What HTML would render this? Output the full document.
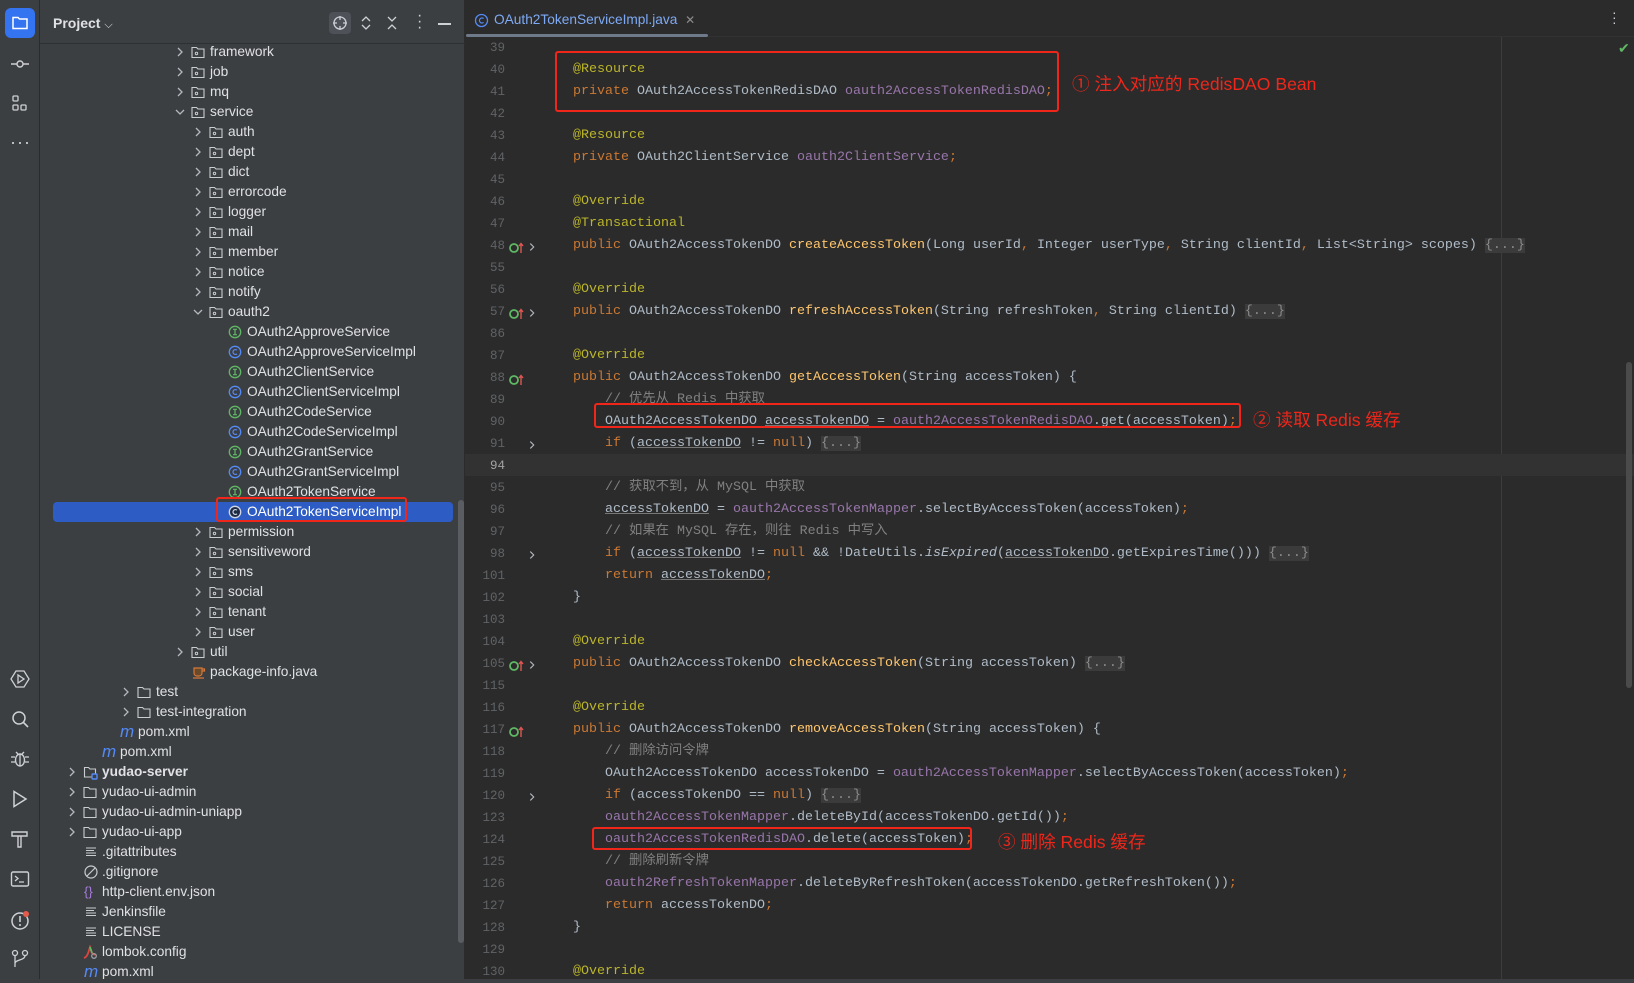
<!DOCTYPE html>
<html><head><meta charset="utf-8">
<style>
*{margin:0;padding:0;box-sizing:border-box}
body{width:1634px;height:983px;background:#2b2b2b;position:relative;overflow:hidden;font-family:"Liberation Sans","Noto Sans CJK SC",sans-serif}
.abs{position:absolute}
#side{left:0;top:0;width:40px;height:983px;background:#3c3f41;border-right:1px solid #2b2b2b}
#proj{left:40px;top:0;width:425px;height:983px;background:#3c3f41;border-right:1px solid #2b2b2b}
.r{position:absolute;height:20px;line-height:20px;font-size:13.7px;color:#dfe1e5;white-space:nowrap}
.r svg{position:absolute;top:3px}
.t{position:absolute}
.code{position:absolute;left:573px;height:22px;line-height:22px;font-family:"Liberation Mono","Noto Sans CJK SC",monospace;font-size:13.33px;color:#b0bcc8;white-space:pre}
.ln{position:absolute;left:466px;width:39px;text-align:right;height:22px;line-height:22px;font-family:"Liberation Mono",monospace;font-size:12.5px;color:#606366}
.k{color:#cc7832}.a{color:#bbb529}.f{color:#9876aa}.m{color:#ffc66d}.c{color:#808080}.u{text-decoration:underline;text-decoration-color:#777}
.fold{background:#3b3b3b;color:#8c8c8c}
.box{position:absolute;border:2px solid #f0261a;border-radius:3px}
.ann{position:absolute;color:#f0261a;font-size:17.6px;font-family:"Liberation Sans","Noto Sans CJK SC",sans-serif;white-space:nowrap}
</style></head><body>
<svg width="0" height="0" style="position:absolute">
<defs>
<symbol id="cr" viewBox="0 0 14 14"><path d="M5 3l4 4-4 4" fill="none" stroke="#b4b8bf" stroke-width="1.3"/></symbol>
<symbol id="cd" viewBox="0 0 14 14"><path d="M3 5l4 4 4-4" fill="none" stroke="#b4b8bf" stroke-width="1.3"/></symbol>
<symbol id="pk" viewBox="0 0 14 14"><path d="M1 2.5h4.5l1.5 1.5h6v8.5H1z" fill="none" stroke="#c9ccd1" stroke-width="1.1"/><circle cx="5.5" cy="8.5" r="1.2" fill="none" stroke="#c9ccd1"/></symbol>
<symbol id="fd" viewBox="0 0 14 14"><path d="M1 2.5h4.5l1.5 1.5h6v8.5H1z" fill="none" stroke="#c9ccd1" stroke-width="1.1"/></symbol>
<symbol id="ii" viewBox="0 0 14 14"><circle cx="7" cy="7" r="5.7" fill="none" stroke="#5fb865" stroke-width="1.3"/><path d="M5 4.3h4M5 9.7h4M7 4.3v5.4" stroke="#5fb865" stroke-width="1.2"/></symbol>
<symbol id="ci" viewBox="0 0 14 14"><circle cx="7" cy="7" r="5.7" fill="none" stroke="#548af7" stroke-width="1.3"/><path d="M9 5.2a2.4 2.4 0 1 0 0 3.6" fill="none" stroke="#548af7" stroke-width="1.2"/></symbol>
<symbol id="lf" viewBox="0 0 14 14"><path d="M2 3h10M2 5.5h8M2 8h10M2 10.5h10" stroke="#c9ccd1" stroke-width="1.1"/></symbol>
<symbol id="gi" viewBox="0 0 20 14"><circle cx="5" cy="7" r="4" fill="none" stroke="#5fb865" stroke-width="1.8"/><path d="M12 12V3M10 5l2-2.5 2 2.5" stroke="#e05555" stroke-width="1.4" fill="none"/></symbol>
</defs></svg>

<div class="abs" style="left:0;top:0;width:1634px;height:2px;background:#2b2b2b"></div>
<div id="side" class="abs">
 <div class="abs" style="left:5px;top:8px;width:30px;height:30px;background:#3574f0;border-radius:6px"></div>
 <svg class="abs" style="left:11px;top:14px" width="18" height="18" viewBox="0 0 18 18"><path d="M2 3.5h5l1.5 1.5h7.5v9.5H2z" fill="none" stroke="#fff" stroke-width="1.5"/></svg>
 <svg class="abs" style="left:10px;top:54px" width="20" height="20" viewBox="0 0 20 20"><circle cx="10" cy="10" r="3" fill="none" stroke="#ced0d6" stroke-width="1.4"/><path d="M1 10h6M13 10h6" stroke="#ced0d6" stroke-width="1.4"/></svg>
 <svg class="abs" style="left:10px;top:94px" width="20" height="20" viewBox="0 0 20 20"><rect x="3" y="2" width="5" height="5" rx="1" fill="none" stroke="#ced0d6" stroke-width="1.3"/><rect x="3" y="11" width="5" height="5" rx="1" fill="none" stroke="#ced0d6" stroke-width="1.3"/><rect x="11" y="11" width="5" height="5" rx="1" fill="none" stroke="#ced0d6" stroke-width="1.3"/></svg>
 <div class="abs" style="left:10px;top:132px;color:#ced0d6;font-size:18px;letter-spacing:1px">···</div>
 <svg class="abs" style="left:10px;top:669px" width="20" height="20" viewBox="0 0 20 20"><path d="M6 2h8l5 8-5 8H6l-5-8z" fill="none" stroke="#ced0d6" stroke-width="1.3"/><path d="M8 6v8l6-4z" fill="none" stroke="#ced0d6" stroke-width="1.3"/></svg>
 <svg class="abs" style="left:10px;top:709px" width="20" height="20" viewBox="0 0 20 20"><circle cx="9" cy="9" r="6" fill="none" stroke="#ced0d6" stroke-width="1.5"/><path d="M13.5 13.5l4.5 4.5" stroke="#ced0d6" stroke-width="1.6"/></svg>
 <svg class="abs" style="left:10px;top:749px" width="20" height="20" viewBox="0 0 20 20"><ellipse cx="10" cy="11" rx="4.5" ry="6" fill="none" stroke="#ced0d6" stroke-width="1.4"/><path d="M1 8h4M15 8h4M1 13h4M15 13h4M6 3l2 2M14 3l-2 2M10 5v12" stroke="#ced0d6" stroke-width="1.3"/></svg>
 <svg class="abs" style="left:10px;top:789px" width="20" height="20" viewBox="0 0 20 20"><path d="M4 2.5v15l12-7.5z" fill="none" stroke="#ced0d6" stroke-width="1.5"/></svg>
 <svg class="abs" style="left:10px;top:829px" width="20" height="20" viewBox="0 0 20 20"><path d="M2 3h15v4H2zM8 7v11h3V7" fill="none" stroke="#ced0d6" stroke-width="1.4"/></svg>
 <svg class="abs" style="left:10px;top:869px" width="20" height="20" viewBox="0 0 20 20"><rect x="1.5" y="3" width="17" height="14" rx="1.5" fill="none" stroke="#ced0d6" stroke-width="1.4"/><path d="M5 7l3 2.5-3 2.5M9 13h5" fill="none" stroke="#ced0d6" stroke-width="1.3"/></svg>
 <svg class="abs" style="left:10px;top:909px" width="22" height="22" viewBox="0 0 22 22"><circle cx="10" cy="12" r="8" fill="none" stroke="#ced0d6" stroke-width="1.5"/><path d="M10 7v6M10 15v2" stroke="#ced0d6" stroke-width="1.6"/><circle cx="16" cy="5" r="3" fill="#e55b4b"/></svg>
 <svg class="abs" style="left:10px;top:949px" width="20" height="20" viewBox="0 0 20 20"><circle cx="5" cy="4" r="2.5" fill="none" stroke="#ced0d6" stroke-width="1.3"/><circle cx="15" cy="4" r="2.5" fill="none" stroke="#ced0d6" stroke-width="1.3"/><path d="M5 6.5V18M15 6.5c0 5-10 4-10 8" fill="none" stroke="#ced0d6" stroke-width="1.3"/></svg>
</div>

<div id="proj" class="abs">
 <div class="abs" style="left:13px;top:15px;font-size:14px;font-weight:bold;color:#dfe1e5">Project <span style="font-weight:normal;font-size:11px">⌵</span></div>
 <div class="abs" style="left:289px;top:12px;width:22px;height:22px;background:#4e5157;border-radius:4px"></div>
 <svg class="abs" style="left:292px;top:15px" width="16" height="16" viewBox="0 0 16 16"><circle cx="8" cy="8" r="6" fill="none" stroke="#ced0d6" stroke-width="1.3"/><path d="M8 1v4M8 11v4M1 8h4M11 8h4" stroke="#ced0d6" stroke-width="1.3"/></svg>
 <svg class="abs" style="left:318px;top:15px" width="16" height="16" viewBox="0 0 16 16"><path d="M4 6l4-4 4 4M4 10l4 4 4-4" fill="none" stroke="#ced0d6" stroke-width="1.3"/></svg>
 <svg class="abs" style="left:344px;top:15px" width="16" height="16" viewBox="0 0 16 16"><path d="M4 2l4 4 4-4M4 14l4-4 4 4" fill="none" stroke="#ced0d6" stroke-width="1.3"/></svg>
 <div class="abs" style="left:377px;top:13px;width:3px;height:18px;color:#ced0d6;font-size:16px;line-height:6px;text-align:center">·<br>·<br>·</div>
 <div class="abs" style="left:398px;top:23px;width:13px;height:1.5px;background:#ced0d6"></div>
 <div class="abs" style="left:0;top:43px;width:425px;height:1px;background:#2e3033"></div>
 <div class="abs" style="left:13px;top:502px;width:400px;height:20px;background:#2e5cc5;border-radius:4px"></div>
 <div class="abs" style="left:418px;top:500px;width:6px;height:443px;background:#5a5d62;border-radius:3px"></div>
</div>

<div class="r" style="top:42px;left:0"><svg style="left:173px" width="14" height="14"><use href="#cr"/></svg><svg style="left:191px" width="14" height="14"><use href="#pk"/></svg><span class="t" style="left:210px">framework</span></div>
<div class="r" style="top:62px;left:0"><svg style="left:173px" width="14" height="14"><use href="#cr"/></svg><svg style="left:191px" width="14" height="14"><use href="#pk"/></svg><span class="t" style="left:210px">job</span></div>
<div class="r" style="top:82px;left:0"><svg style="left:173px" width="14" height="14"><use href="#cr"/></svg><svg style="left:191px" width="14" height="14"><use href="#pk"/></svg><span class="t" style="left:210px">mq</span></div>
<div class="r" style="top:102px;left:0"><svg style="left:173px" width="14" height="14"><use href="#cd"/></svg><svg style="left:191px" width="14" height="14"><use href="#pk"/></svg><span class="t" style="left:210px">service</span></div>
<div class="r" style="top:122px;left:0"><svg style="left:191px" width="14" height="14"><use href="#cr"/></svg><svg style="left:209px" width="14" height="14"><use href="#pk"/></svg><span class="t" style="left:228px">auth</span></div>
<div class="r" style="top:142px;left:0"><svg style="left:191px" width="14" height="14"><use href="#cr"/></svg><svg style="left:209px" width="14" height="14"><use href="#pk"/></svg><span class="t" style="left:228px">dept</span></div>
<div class="r" style="top:162px;left:0"><svg style="left:191px" width="14" height="14"><use href="#cr"/></svg><svg style="left:209px" width="14" height="14"><use href="#pk"/></svg><span class="t" style="left:228px">dict</span></div>
<div class="r" style="top:182px;left:0"><svg style="left:191px" width="14" height="14"><use href="#cr"/></svg><svg style="left:209px" width="14" height="14"><use href="#pk"/></svg><span class="t" style="left:228px">errorcode</span></div>
<div class="r" style="top:202px;left:0"><svg style="left:191px" width="14" height="14"><use href="#cr"/></svg><svg style="left:209px" width="14" height="14"><use href="#pk"/></svg><span class="t" style="left:228px">logger</span></div>
<div class="r" style="top:222px;left:0"><svg style="left:191px" width="14" height="14"><use href="#cr"/></svg><svg style="left:209px" width="14" height="14"><use href="#pk"/></svg><span class="t" style="left:228px">mail</span></div>
<div class="r" style="top:242px;left:0"><svg style="left:191px" width="14" height="14"><use href="#cr"/></svg><svg style="left:209px" width="14" height="14"><use href="#pk"/></svg><span class="t" style="left:228px">member</span></div>
<div class="r" style="top:262px;left:0"><svg style="left:191px" width="14" height="14"><use href="#cr"/></svg><svg style="left:209px" width="14" height="14"><use href="#pk"/></svg><span class="t" style="left:228px">notice</span></div>
<div class="r" style="top:282px;left:0"><svg style="left:191px" width="14" height="14"><use href="#cr"/></svg><svg style="left:209px" width="14" height="14"><use href="#pk"/></svg><span class="t" style="left:228px">notify</span></div>
<div class="r" style="top:302px;left:0"><svg style="left:191px" width="14" height="14"><use href="#cd"/></svg><svg style="left:209px" width="14" height="14"><use href="#pk"/></svg><span class="t" style="left:228px">oauth2</span></div>
<div class="r" style="top:322px;left:0"><svg style="left:228px" width="14" height="14"><use href="#ii"/></svg><span class="t" style="left:247px">OAuth2ApproveService</span></div>
<div class="r" style="top:342px;left:0"><svg style="left:228px" width="14" height="14"><use href="#ci"/></svg><span class="t" style="left:247px">OAuth2ApproveServiceImpl</span></div>
<div class="r" style="top:362px;left:0"><svg style="left:228px" width="14" height="14"><use href="#ii"/></svg><span class="t" style="left:247px">OAuth2ClientService</span></div>
<div class="r" style="top:382px;left:0"><svg style="left:228px" width="14" height="14"><use href="#ci"/></svg><span class="t" style="left:247px">OAuth2ClientServiceImpl</span></div>
<div class="r" style="top:402px;left:0"><svg style="left:228px" width="14" height="14"><use href="#ii"/></svg><span class="t" style="left:247px">OAuth2CodeService</span></div>
<div class="r" style="top:422px;left:0"><svg style="left:228px" width="14" height="14"><use href="#ci"/></svg><span class="t" style="left:247px">OAuth2CodeServiceImpl</span></div>
<div class="r" style="top:442px;left:0"><svg style="left:228px" width="14" height="14"><use href="#ii"/></svg><span class="t" style="left:247px">OAuth2GrantService</span></div>
<div class="r" style="top:462px;left:0"><svg style="left:228px" width="14" height="14"><use href="#ci"/></svg><span class="t" style="left:247px">OAuth2GrantServiceImpl</span></div>
<div class="r" style="top:482px;left:0"><svg style="left:228px" width="14" height="14"><use href="#ii"/></svg><span class="t" style="left:247px">OAuth2TokenService</span></div>
<div class="r" style="top:502px;left:0;color:#fff"><svg style="left:228px" width="14" height="14"><circle cx="7" cy="7" r="5.7" fill="#1f2a44" stroke="#cfd6e6" stroke-width="1.3"/><path d="M9 5.2a2.4 2.4 0 1 0 0 3.6" fill="none" stroke="#cfd6e6" stroke-width="1.2"/></svg><span class="t" style="left:247px">OAuth2TokenServiceImpl</span></div>
<div class="box" style="left:216px;top:497px;width:191px;height:25px"></div>
<div class="r" style="top:522px;left:0"><svg style="left:191px" width="14" height="14"><use href="#cr"/></svg><svg style="left:209px" width="14" height="14"><use href="#pk"/></svg><span class="t" style="left:228px">permission</span></div>
<div class="r" style="top:542px;left:0"><svg style="left:191px" width="14" height="14"><use href="#cr"/></svg><svg style="left:209px" width="14" height="14"><use href="#pk"/></svg><span class="t" style="left:228px">sensitiveword</span></div>
<div class="r" style="top:562px;left:0"><svg style="left:191px" width="14" height="14"><use href="#cr"/></svg><svg style="left:209px" width="14" height="14"><use href="#pk"/></svg><span class="t" style="left:228px">sms</span></div>
<div class="r" style="top:582px;left:0"><svg style="left:191px" width="14" height="14"><use href="#cr"/></svg><svg style="left:209px" width="14" height="14"><use href="#pk"/></svg><span class="t" style="left:228px">social</span></div>
<div class="r" style="top:602px;left:0"><svg style="left:191px" width="14" height="14"><use href="#cr"/></svg><svg style="left:209px" width="14" height="14"><use href="#pk"/></svg><span class="t" style="left:228px">tenant</span></div>
<div class="r" style="top:622px;left:0"><svg style="left:191px" width="14" height="14"><use href="#cr"/></svg><svg style="left:209px" width="14" height="14"><use href="#pk"/></svg><span class="t" style="left:228px">user</span></div>
<div class="r" style="top:642px;left:0"><svg style="left:173px" width="14" height="14"><use href="#cr"/></svg><svg style="left:191px" width="14" height="14"><use href="#pk"/></svg><span class="t" style="left:210px">util</span></div>
<div class="r" style="top:662px;left:0"><svg style="left:192px" width="14" height="14" viewBox="0 0 14 14"><path d="M2 3h8v5a3 3 0 0 1-3 3H5a3 3 0 0 1-3-3z" fill="#6b4a2a" stroke="#d4773a" stroke-width="1.2"/><path d="M10 4h2.5v2H10M1 13h11" stroke="#d4773a" stroke-width="1.2" fill="none"/></svg><span class="t" style="left:210px">package-info.java</span></div>
<div class="r" style="top:682px;left:0"><svg style="left:119px" width="14" height="14"><use href="#cr"/></svg><svg style="left:137px" width="14" height="14"><use href="#fd"/></svg><span class="t" style="left:156px">test</span></div>
<div class="r" style="top:702px;left:0"><svg style="left:119px" width="14" height="14"><use href="#cr"/></svg><svg style="left:137px" width="14" height="14"><use href="#fd"/></svg><span class="t" style="left:156px">test-integration</span></div>
<div class="r" style="top:722px;left:0"><span class="t" style="left:120px;color:#548af7;font-style:italic;font-size:17px">m</span><span class="t" style="left:138px">pom.xml</span></div>
<div class="r" style="top:742px;left:0"><span class="t" style="left:102px;color:#548af7;font-style:italic;font-size:17px">m</span><span class="t" style="left:120px">pom.xml</span></div>
<div class="r" style="top:762px;left:0"><svg style="left:65px" width="14" height="14"><use href="#cr"/></svg><svg style="left:83px" width="16" height="16" viewBox="0 0 16 16"><path d="M1.5 2.5h4l1.5 1.5h5.5v8h-11z" fill="none" stroke="#c9ccd1" stroke-width="1.1"/><rect x="9" y="9" width="5" height="5" rx="1" fill="#3c3f41" stroke="#548af7" stroke-width="1.4"/></svg><span class="t" style="left:102px;font-weight:bold">yudao-server</span></div>
<div class="r" style="top:782px;left:0"><svg style="left:65px" width="14" height="14"><use href="#cr"/></svg><svg style="left:83px" width="14" height="14"><use href="#fd"/></svg><span class="t" style="left:102px">yudao-ui-admin</span></div>
<div class="r" style="top:802px;left:0"><svg style="left:65px" width="14" height="14"><use href="#cr"/></svg><svg style="left:83px" width="14" height="14"><use href="#fd"/></svg><span class="t" style="left:102px">yudao-ui-admin-uniapp</span></div>
<div class="r" style="top:822px;left:0"><svg style="left:65px" width="14" height="14"><use href="#cr"/></svg><svg style="left:83px" width="14" height="14"><use href="#fd"/></svg><span class="t" style="left:102px">yudao-ui-app</span></div>
<div class="r" style="top:842px;left:0"><svg style="left:84px" width="14" height="14"><use href="#lf"/></svg><span class="t" style="left:102px">.gitattributes</span></div>
<div class="r" style="top:862px;left:0"><svg style="left:84px" width="14" height="14" viewBox="0 0 14 14"><circle cx="7" cy="7" r="6" fill="none" stroke="#c9ccd1" stroke-width="1.2"/><path d="M3 11l8-8" stroke="#c9ccd1" stroke-width="1.2"/></svg><span class="t" style="left:102px">.gitignore</span></div>
<div class="r" style="top:882px;left:0"><span class="t" style="left:84px;color:#a77be0;font-size:13px">{}</span><span class="t" style="left:102px">http-client.env.json</span></div>
<div class="r" style="top:902px;left:0"><svg style="left:84px" width="14" height="14"><use href="#lf"/></svg><span class="t" style="left:102px">Jenkinsfile</span></div>
<div class="r" style="top:922px;left:0"><svg style="left:84px" width="14" height="14"><use href="#lf"/></svg><span class="t" style="left:102px">LICENSE</span></div>
<div class="r" style="top:942px;left:0"><svg style="left:83px" width="15" height="15" viewBox="0 0 15 15"><path d="M1 13c3-1 4-4 6-11l2 6 3 2" fill="none" stroke="#e0443e" stroke-width="1.8"/><path d="M7 2l2 6" stroke="#5fb865" stroke-width="1.8"/><circle cx="11" cy="11" r="2.3" fill="none" stroke="#9aa0a8" stroke-width="1.3"/></svg><span class="t" style="left:102px">lombok.config</span></div>
<div class="r" style="top:962px;left:0"><span class="t" style="left:84px;color:#548af7;font-style:italic;font-size:17px">m</span><span class="t" style="left:102px">pom.xml</span></div>

<div class="abs" style="left:466px;top:0;width:1168px;height:37px;background:#2b2b2b;border-bottom:1px solid #323232"></div>
<svg class="abs" style="left:474px;top:13px" width="15" height="15"><circle cx="7.5" cy="7.5" r="6" fill="none" stroke="#548af7" stroke-width="1.3"/><path d="M9.6 5.6a2.5 2.5 0 1 0 0 3.8" fill="none" stroke="#548af7" stroke-width="1.2"/></svg>
<div class="abs" style="left:494px;top:12px;font-size:13.7px;color:#7eaaf5">OAuth2TokenServiceImpl.java <span style="color:#8c8c8c;font-size:12px;margin-left:4px">✕</span></div>
<div class="abs" style="left:466px;top:34px;width:242px;height:3px;background:#6e7a8a;border-radius:2px"></div>
<div class="abs" style="left:1612px;top:10px;width:3px;color:#ced0d6;font-size:14px;line-height:5px">·<br>·<br>·</div>

<div class="abs" style="left:1501px;top:37px;width:1px;height:942px;background:#3d3d3d"></div>
<div class="abs" style="left:465px;top:454px;width:1169px;height:22px;background:#323232"></div>
<div class="abs" style="left:1626px;top:362px;width:6px;height:326px;background:#4b4b4b;border-radius:3px"></div>
<div class="abs" style="left:1618px;top:40px;color:#5fb865;font-size:14px">✔</div>
<div class="abs" style="left:0;top:979px;width:1634px;height:4px;background:#3c3f41"></div>

<div class="ln" style="top:37px">39</div>
<div class="ln" style="top:59px">40</div><div class="code a" style="top:59px">@Resource</div>
<div class="ln" style="top:81px">41</div><div class="code" style="top:81px"><span class="k">private </span>OAuth2AccessTokenRedisDAO <span class="f">oauth2AccessTokenRedisDAO</span><span class="k">;</span></div>
<div class="ln" style="top:103px">42</div>
<div class="ln" style="top:125px">43</div><div class="code a" style="top:125px">@Resource</div>
<div class="ln" style="top:147px">44</div><div class="code" style="top:147px"><span class="k">private </span>OAuth2ClientService <span class="f">oauth2ClientService</span><span class="k">;</span></div>
<div class="ln" style="top:169px">45</div>
<div class="ln" style="top:191px">46</div><div class="code a" style="top:191px">@Override</div>
<div class="ln" style="top:213px">47</div><div class="code a" style="top:213px">@Transactional</div>
<div class="ln" style="top:235px">48</div><div class="code" style="top:235px"><span class="k">public </span>OAuth2AccessTokenDO <span class="m">createAccessToken</span>(Long userId<span class="k">, </span>Integer userType<span class="k">, </span>String clientId<span class="k">, </span>List&lt;String&gt; scopes) <span class="fold">{...}</span></div>
<div class="ln" style="top:257px">55</div>
<div class="ln" style="top:279px">56</div><div class="code a" style="top:279px">@Override</div>
<div class="ln" style="top:301px">57</div><div class="code" style="top:301px"><span class="k">public </span>OAuth2AccessTokenDO <span class="m">refreshAccessToken</span>(String refreshToken<span class="k">, </span>String clientId) <span class="fold">{...}</span></div>
<div class="ln" style="top:323px">86</div>
<div class="ln" style="top:345px">87</div><div class="code a" style="top:345px">@Override</div>
<div class="ln" style="top:367px">88</div><div class="code" style="top:367px"><span class="k">public </span>OAuth2AccessTokenDO <span class="m">getAccessToken</span>(String accessToken) {</div>
<div class="ln" style="top:389px">89</div><div class="code c" style="top:389px">    // 优先从 Redis 中获取</div>
<div class="ln" style="top:411px">90</div><div class="code" style="top:411px">    OAuth2AccessTokenDO <span class="u">accessTokenDO</span> = <span class="f">oauth2AccessTokenRedisDAO</span>.get(accessToken)<span class="k">;</span></div>
<div class="ln" style="top:433px">91</div><div class="code" style="top:433px">    <span class="k">if </span>(<span class="u">accessTokenDO</span> != <span class="k">null</span>) <span class="fold">{...}</span></div>
<div class="ln" style="top:455px;color:#a4a3a3">94</div>
<div class="ln" style="top:477px">95</div><div class="code c" style="top:477px">    // 获取不到，从 MySQL 中获取</div>
<div class="ln" style="top:499px">96</div><div class="code" style="top:499px">    <span class="u">accessTokenDO</span> = <span class="f">oauth2AccessTokenMapper</span>.selectByAccessToken(accessToken)<span class="k">;</span></div>
<div class="ln" style="top:521px">97</div><div class="code c" style="top:521px">    // 如果在 MySQL 存在，则往 Redis 中写入</div>
<div class="ln" style="top:543px">98</div><div class="code" style="top:543px">    <span class="k">if </span>(<span class="u">accessTokenDO</span> != <span class="k">null </span>&amp;&amp; !DateUtils.<i>isExpired</i>(<span class="u">accessTokenDO</span>.getExpiresTime())) <span class="fold">{...}</span></div>
<div class="ln" style="top:565px">101</div><div class="code" style="top:565px">    <span class="k">return </span><span class="u">accessTokenDO</span><span class="k">;</span></div>
<div class="ln" style="top:587px">102</div><div class="code" style="top:587px">}</div>
<div class="ln" style="top:609px">103</div>
<div class="ln" style="top:631px">104</div><div class="code a" style="top:631px">@Override</div>
<div class="ln" style="top:653px">105</div><div class="code" style="top:653px"><span class="k">public </span>OAuth2AccessTokenDO <span class="m">checkAccessToken</span>(String accessToken) <span class="fold">{...}</span></div>
<div class="ln" style="top:675px">115</div>
<div class="ln" style="top:697px">116</div><div class="code a" style="top:697px">@Override</div>
<div class="ln" style="top:719px">117</div><div class="code" style="top:719px"><span class="k">public </span>OAuth2AccessTokenDO <span class="m">removeAccessToken</span>(String accessToken) {</div>
<div class="ln" style="top:741px">118</div><div class="code c" style="top:741px">    // 删除访问令牌</div>
<div class="ln" style="top:763px">119</div><div class="code" style="top:763px">    OAuth2AccessTokenDO accessTokenDO = <span class="f">oauth2AccessTokenMapper</span>.selectByAccessToken(accessToken)<span class="k">;</span></div>
<div class="ln" style="top:785px">120</div><div class="code" style="top:785px">    <span class="k">if </span>(accessTokenDO == <span class="k">null</span>) <span class="fold">{...}</span></div>
<div class="ln" style="top:807px">123</div><div class="code" style="top:807px">    <span class="f">oauth2AccessTokenMapper</span>.deleteById(accessTokenDO.getId())<span class="k">;</span></div>
<div class="ln" style="top:829px">124</div><div class="code" style="top:829px">    <span class="f">oauth2AccessTokenRedisDAO</span>.delete(accessToken)<span class="k">;</span></div>
<div class="ln" style="top:851px">125</div><div class="code c" style="top:851px">    // 删除刷新令牌</div>
<div class="ln" style="top:873px">126</div><div class="code" style="top:873px">    <span class="f">oauth2RefreshTokenMapper</span>.deleteByRefreshToken(accessTokenDO.getRefreshToken())<span class="k">;</span></div>
<div class="ln" style="top:895px">127</div><div class="code" style="top:895px">    <span class="k">return </span>accessTokenDO<span class="k">;</span></div>
<div class="ln" style="top:917px">128</div><div class="code" style="top:917px">}</div>
<div class="ln" style="top:939px">129</div>
<div class="ln" style="top:961px">130</div><div class="code a" style="top:961px">@Override</div>

<svg class="abs" style="left:509px;top:241px" width="20" height="14"><use href="#gi"/></svg>
<svg class="abs" style="left:509px;top:307px" width="20" height="14"><use href="#gi"/></svg>
<svg class="abs" style="left:509px;top:373px" width="20" height="14"><use href="#gi"/></svg>
<svg class="abs" style="left:509px;top:659px" width="20" height="14"><use href="#gi"/></svg>
<svg class="abs" style="left:509px;top:725px" width="20" height="14"><use href="#gi"/></svg>
<svg class="abs" style="left:526px;top:241px" width="12" height="12" viewBox="0 0 14 14"><use href="#cr"/></svg>
<svg class="abs" style="left:526px;top:307px" width="12" height="12" viewBox="0 0 14 14"><use href="#cr"/></svg>
<svg class="abs" style="left:526px;top:439px" width="12" height="12" viewBox="0 0 14 14"><use href="#cr"/></svg>
<svg class="abs" style="left:526px;top:549px" width="12" height="12" viewBox="0 0 14 14"><use href="#cr"/></svg>
<svg class="abs" style="left:526px;top:659px" width="12" height="12" viewBox="0 0 14 14"><use href="#cr"/></svg>
<svg class="abs" style="left:526px;top:791px" width="12" height="12" viewBox="0 0 14 14"><use href="#cr"/></svg>

<div class="box" style="left:555px;top:51px;width:504px;height:61px"></div>
<div class="ann" style="left:1072px;top:71px">① 注入对应的 RedisDAO Bean</div>
<div class="box" style="left:594px;top:403px;width:647px;height:25px"></div>
<div class="ann" style="left:1253px;top:407px">② 读取 Redis 缓存</div>
<div class="box" style="left:592px;top:827px;width:380px;height:23px"></div>
<div class="ann" style="left:998px;top:829px">③ 删除 Redis 缓存</div>
</body></html>
